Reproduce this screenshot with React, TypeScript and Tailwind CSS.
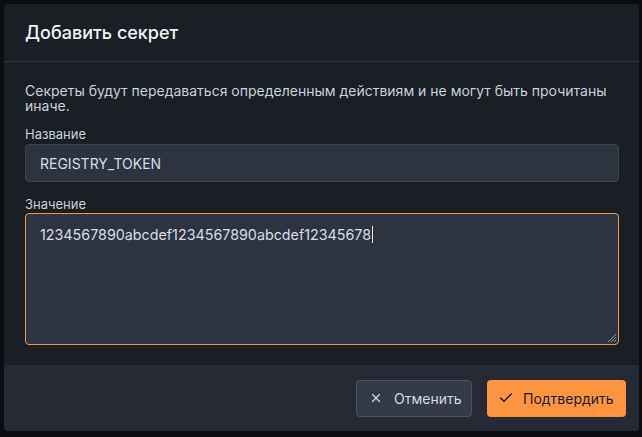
import { Check, X } from "lucide-react";

const VALUE = "1234567890abcdef1234567890abcdef12345678";

export default function App() {
  return (
    <div className="w-[642px] h-[437px] bg-[#0b0d10] p-1 font-['Inter',sans-serif]">
      <div className="w-[635px] h-[427px] rounded bg-[#1a1e25] flex flex-col overflow-hidden">
        {/* Header */}
        <div className="h-[58px] shrink-0 px-[21px] flex items-center border-b border-[#2e343e]">
          <h2 className="text-[18px] font-medium text-[#f1f3f5]">Добавить секрет</h2>
        </div>

        {/* Body */}
        <div className="flex-1 px-[21px] pt-[21px]">
          <p className="text-[14px] leading-[15px] text-[#c9d1dc]">
            Секреты будут передаваться определенным действиям и не могут быть прочитаны иначе.
          </p>

          <label className="block mt-[13px] text-[13px] leading-[16px] text-[#c9d1dc]">
            Название
          </label>
          <div className="mt-[2px] h-[38px] w-[594px] rounded border border-[#3c4450] bg-[#2d3440] px-[14px] flex items-center text-[14px] text-[#d7dde5]">
            REGISTRY_TOKEN
          </div>

          <label className="block mt-[14px] text-[13px] leading-[16px] text-[#c9d1dc]">
            Значение
          </label>
          <div className="relative mt-[1px] h-[132px] w-[594px] rounded border border-[#f59645] bg-[#2d3440] px-[14px] py-[11px] text-[14.3px] leading-[20px] text-[#d7dde5]">
            <span>{VALUE}</span>
            <span className="inline-block w-px h-[17px] bg-[#e5e7eb] align-[-3px] ml-px" />
            {/* resize grip */}
            <svg
              className="absolute right-[1px] bottom-[1px]"
              width="10"
              height="10"
              viewBox="0 0 10 10"
            >
              <path d="M9 1 L1 9 M9 4 L4 9 M9 7 L7 9" stroke="#8a919c" strokeWidth="1" />
            </svg>
          </div>
        </div>

        {/* Footer */}
        <div className="h-[66px] shrink-0 bg-[#252a34] flex items-center justify-end gap-[15px] pr-[13px]">
          <button className="h-[37px] w-[116px] pl-[12px] rounded border border-[#4a5260] bg-[#343b47] flex items-center gap-[11px] text-[14px] text-[#d3d9e1]">
            <X className="w-[14px] h-[14px]" strokeWidth={2} />
            Отменить
          </button>
          <button className="h-[37px] w-[139px] pl-[11px] rounded bg-[#fd9540] flex items-center gap-[9px] text-[14px] text-[#1b1d20]">
            <Check className="w-4 h-4" strokeWidth={2.2} />
            Подтвердить
          </button>
        </div>
      </div>
    </div>
  );
}
